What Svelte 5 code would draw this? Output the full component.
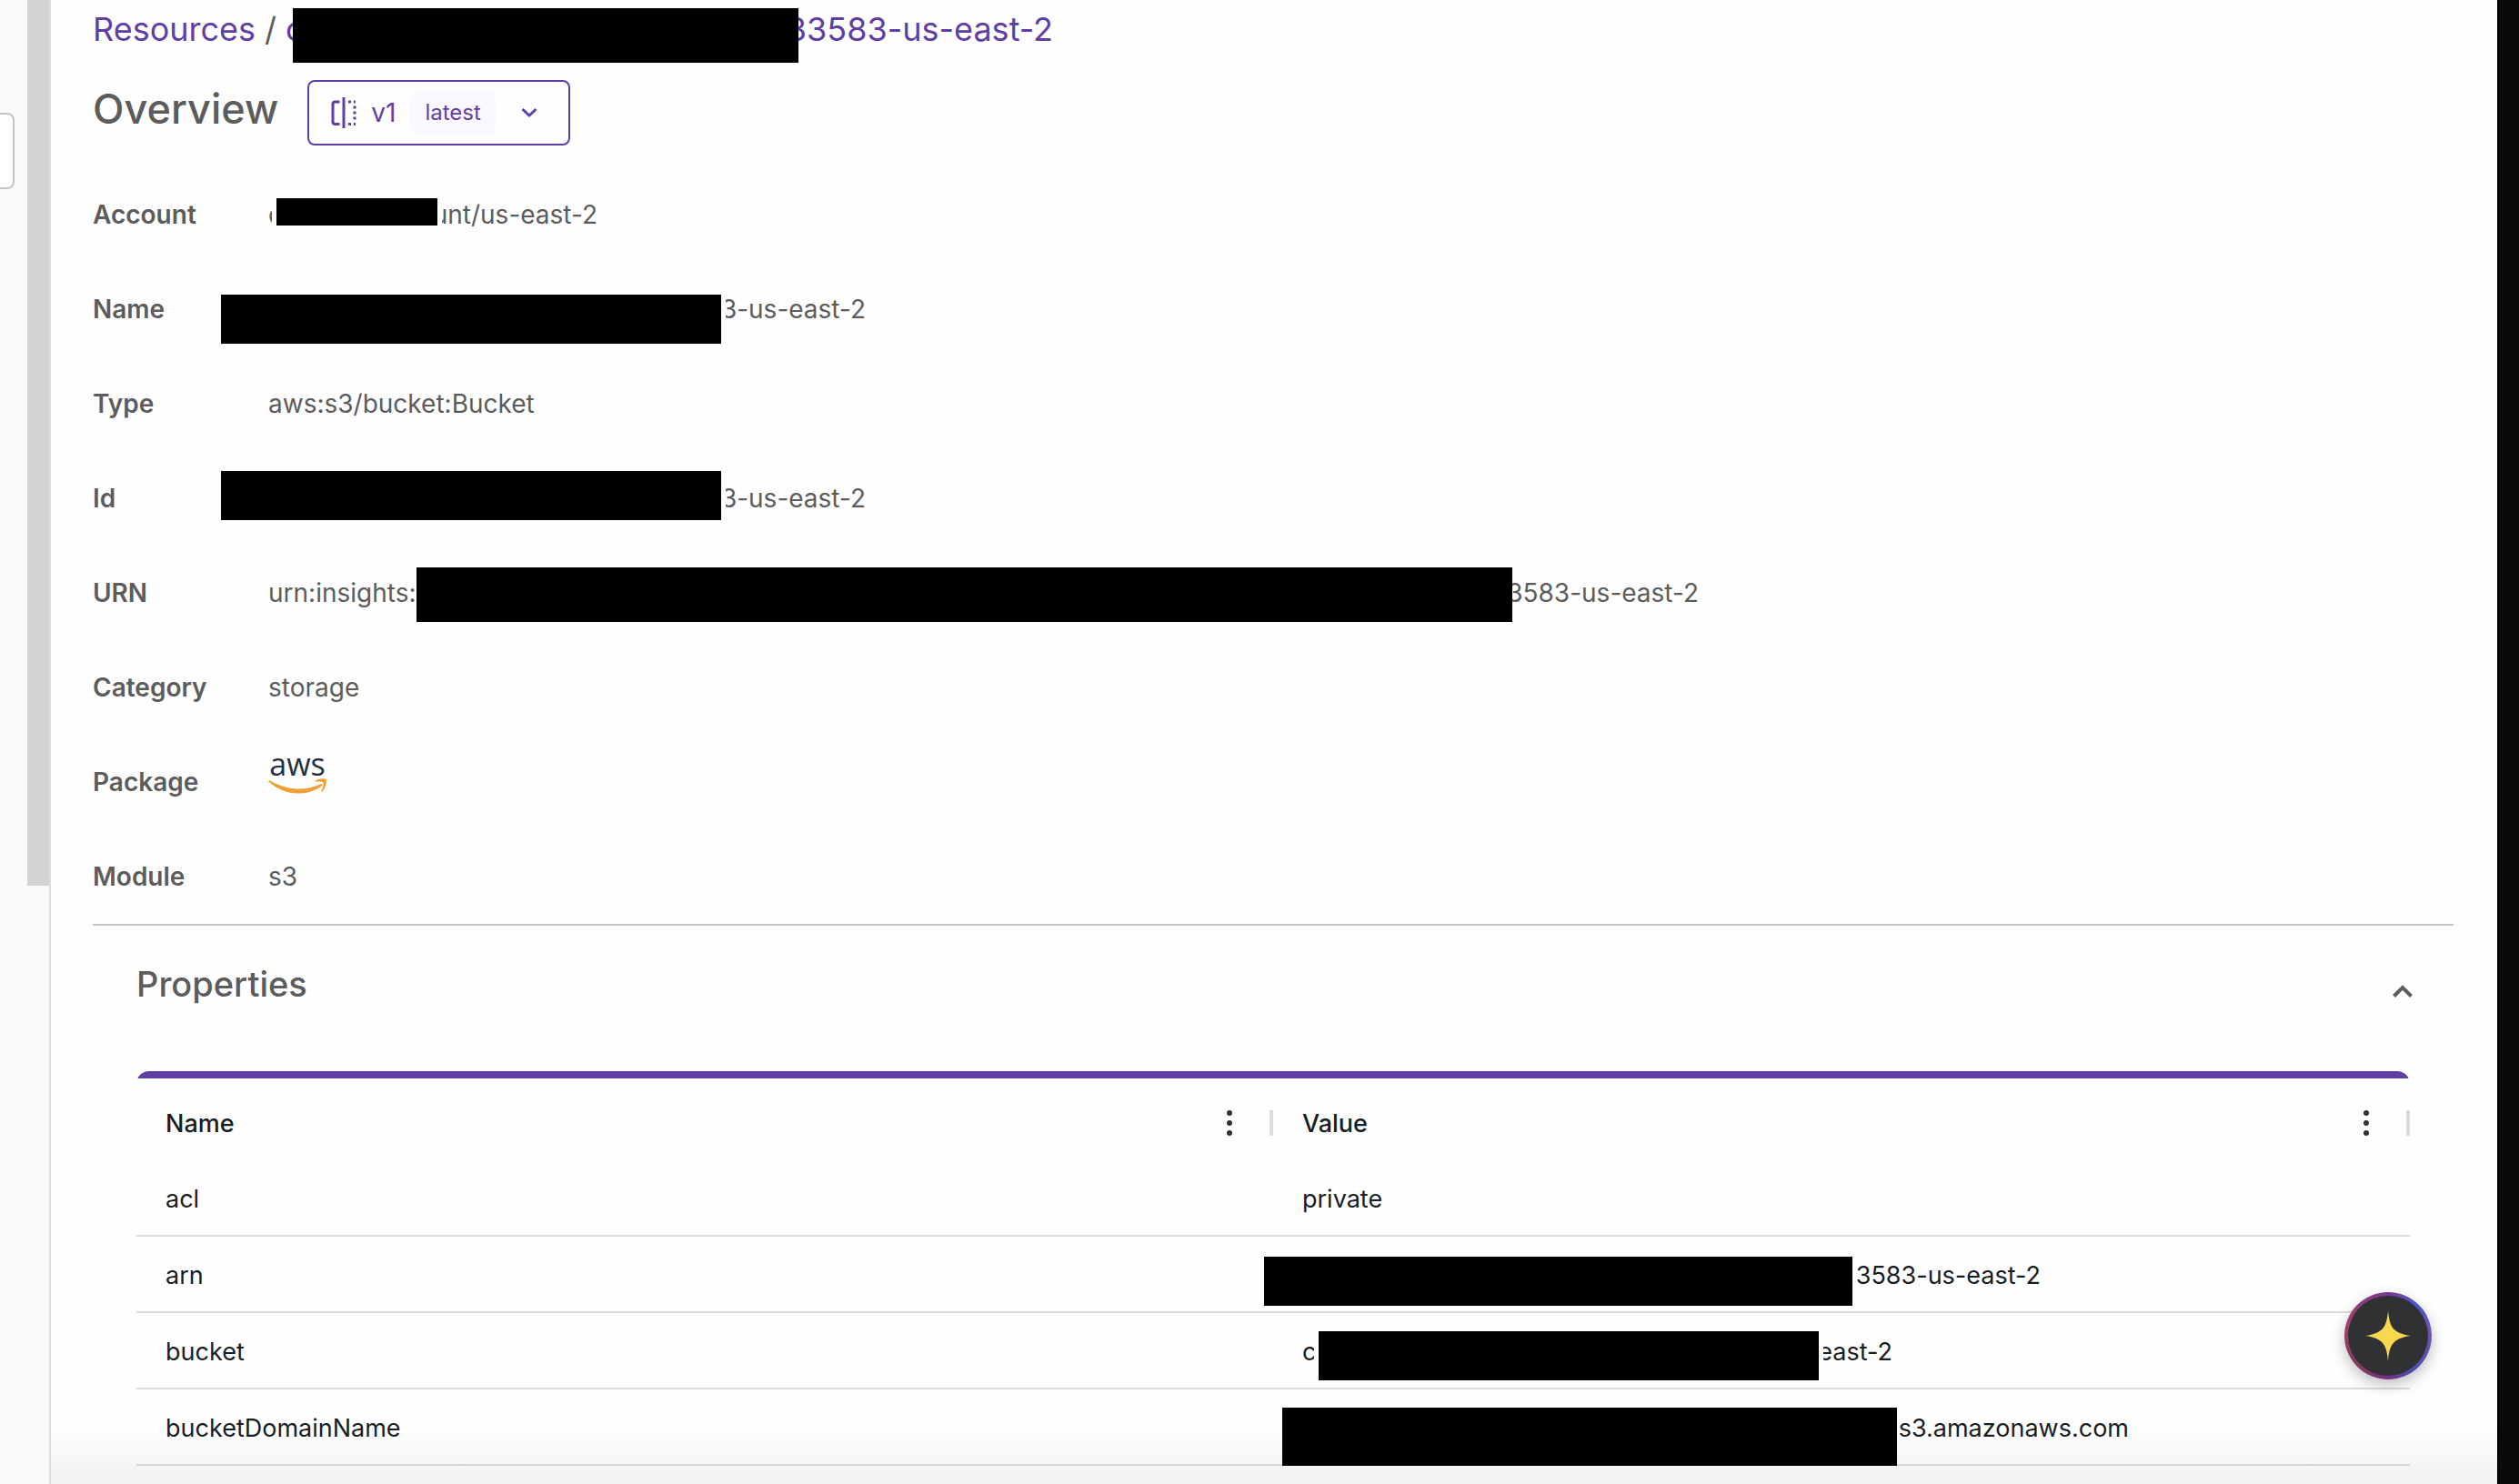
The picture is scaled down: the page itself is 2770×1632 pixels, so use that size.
<script>
  // Cover geometry is relative to the value cell: x, y, width, height.
  const details = [
    { label: 'Account', pre: 'c', post: 'unt/us-east-2', end: 362, cover: [9, 34, 177, 30], gap: true },
    { label: 'Name', pre: '', post: '3-us-east-2', end: 657, cover: [-52, 36, 550, 54], gap: true },
    { label: 'Type', pre: 'aws:s3/bucket:Bucket' },
    { label: 'Id', pre: '', post: '3-us-east-2', end: 657, cover: [-52, 22, 550, 54], gap: true },
    { label: 'URN', pre: 'urn:insights:c', post: '3583-us-east-2', end: 1573, cover: [163, 24, 1205, 60] },
    { label: 'Category', pre: 'storage' },
    { label: 'Package', logo: true },
    { label: 'Module', pre: 's3' }
  ];

  const properties = [
    { name: 'acl', pre: 'private' },
    { name: 'arn', pre: '', post: '3583-us-east-2', end: 812, cover: [-42, 18, 647, 54], gap: true },
    { name: 'bucket', pre: 'c', post: 'east-2', end: 649, cover: [18, 16, 550, 54], gap: true },
    { name: 'bucketDomainName', pre: '', post: 's3.amazonaws.com', end: 909, cover: [-22, 16, 676, 64] }
  ];

  let open = $state(true);

  function box([x, y, w, h]) {
    return `left:${x}px;top:${y}px;width:${w}px;height:${h}px`;
  }
</script>

{#snippet value(item)}
  <span class="value">
    <span class="parts" style={item.end ? `width:${item.end}px` : null}>
      <span>{item.pre}</span>
      {#if item.post}<span>{item.post}</span>{/if}
    </span>
    {#if item.cover}<span class="cover" class:gap={item.gap} style={box(item.cover)}></span>{/if}
  </span>
{/snippet}

{#snippet dots()}
  <svg width="6" height="28" viewBox="0 0 6 28" fill="#2f3133" aria-hidden="true">
    <circle cx="3" cy="3" r="3" /><circle cx="3" cy="14" r="3" /><circle cx="3" cy="25" r="3" />
  </svg>
{/snippet}

<div class="page">
  <aside class="side">
    <div class="nav"><input class="search" aria-label="Search" /></div>
    <div class="track"><div class="thumb"></div></div>
  </aside>

  <main>
    <nav class="crumbs" aria-label="Breadcrumb">
      <a href="#resources">Resources</a>
      <span class="slash">/</span>
      <a class="current" href="#resource">
        <span>c</span><span>33583-us-east-2</span>
        <span class="cover crumb-cover"></span>
      </a>
    </nav>

    <header class="title">
      <h1>Overview</h1>
      <button class="version" type="button">
        <svg width="28" height="34" viewBox="0 0 28 34" fill="none" stroke="currentColor" stroke-width="3" aria-hidden="true">
          <path d="M9.500 5H4.500Q2 5 2 7.500V27Q2 29.500 4.500 29.500H9.500" />
          <path d="M14 0V34" />
          <path d="M19 5H22M25 5H27M26 9.500V12.500M26 15.500V18.500M26 21.500V24.500M19 29.500H22M25 29.500H27" />
        </svg>
        <span class="v">v1</span>
        <span class="chip">latest</span>
        <svg class="down" width="18" height="12" viewBox="0 0 18 12" fill="none" stroke="currentColor" stroke-width="3" aria-hidden="true">
          <path d="M1.500 2L9 9L16.500 2" />
        </svg>
      </button>
    </header>

    <dl>
      {#each details as item}
        <div class="row">
          <dt>{item.label}</dt>
          <dd>
            {#if item.logo}
              <span class="aws">
                <span>aws</span>
                <svg width="64" height="18" viewBox="0 0 64 18" fill="#f29f38" aria-hidden="true">
                  <path d="M0.500 3.500C0 2.500 1 1.800 2 2.400C21 13.500 41 14 57.500 6.200C59 5.500 60.200 7 58.800 8.200C43 20.500 17 19.500 0.500 3.500Z" />
                  <path d="M52 2.700C55 0 63 -0.200 63.700 1.200C64.500 3 63.200 11 59.500 14.400C58.700 15 58 14.700 58.400 13.800C59.400 11.300 61.300 6 60.400 4.600C59.500 3.300 55.500 3.500 53 3.800C52 3.900 51.200 3.300 52 2.700Z" />
                </svg>
              </span>
            {:else}
              {@render value(item)}
            {/if}
          </dd>
        </div>
      {/each}
    </dl>

    <section>
      <h2>
        <button type="button" aria-expanded={open} onclick={() => (open = !open)}>
          <span>Properties</span>
          <svg width="24" height="16" viewBox="0 0 24 16" fill="none" stroke="currentColor" stroke-width="4" aria-hidden="true">
            <path d="M2.500 13.500L12 4L21.500 13.500" />
          </svg>
        </button>
      </h2>
      {#if open}
        <div class="grid">
          <table>
            <thead>
              <tr>
                {#each ['Name', 'Value'] as head}
                  <th scope="col">
                    <div class="head">
                      <span>{head}</span>
                      <button type="button" aria-label="{head} column menu">{@render dots()}</button>
                      <i></i>
                    </div>
                  </th>
                {/each}
              </tr>
            </thead>
            <tbody>
              {#each properties as item}
                <tr><td>{item.name}</td><td>{@render value(item)}</td></tr>
              {/each}
            </tbody>
          </table>
        </div>
      {/if}
    </section>
  </main>

  <div class="edge"></div>

  <button class="assistant" type="button" aria-label="Open assistant">
    <svg width="50" height="56" viewBox="0 0 50 56" fill="#f7d94f" aria-hidden="true">
      <path d="M25 0C26.500 18 30 25 50 28C30 31 26.500 38 25 56C23.500 38 20 31 0 28C20 25 23.500 18 25 0Z" />
    </svg>
  </button>
  <div class="fade"></div>
</div>

<style>
  :global(body) {
    margin: 0;
    background: #fff;
  }
  .page {
    position: relative;
    display: flex;
    height: 100vh;
    overflow: hidden;
    font-family: Inter, sans-serif;
    font-size: 28px;
    color: #5c5c5c;
    background: #fefefe;
  }
  button {
    font: inherit;
    color: inherit;
    background: none;
    border: 0;
    padding: 0;
    cursor: pointer;
  }
  svg {
    display: block;
    flex: none;
  }
  .side {
    display: flex;
    flex: none;
    background: #f9f9f9;
    border-right: 2px solid #dcdcdc;
  }
  .nav {
    display: flex;
    justify-content: flex-end;
    width: 30px;
    padding: 124px 14px 0 0;
    box-sizing: border-box;
    overflow: hidden;
  }
  .search {
    flex: none;
    width: 120px;
    height: 84px;
    box-sizing: border-box;
    border: 2px solid #c4c4c4;
    border-radius: 8px;
    background: #fff;
  }
  .track {
    width: 24px;
  }
  .thumb {
    height: 974px;
    background: #d3d3d3;
  }
  main {
    flex: 1;
    min-width: 0;
    padding: 0 48px 0 46px;
  }
  .edge {
    flex: none;
    width: 22px;
    background: #0a0a0a;
    border-left: 2px solid #000;
  }
  .crumbs {
    display: flex;
    gap: 10px;
    height: 64px;
    line-height: 64px;
    font-size: 36px;
  }
  .crumbs a {
    color: #5f3fa6;
    text-decoration: none;
  }
  .current {
    position: relative;
    display: flex;
    justify-content: space-between;
    width: 844px;
  }
  .cover {
    position: absolute;
    background: #000;
  }
  .crumb-cover {
    left: 8px;
    top: 9px;
    width: 556px;
    height: 60px;
  }
  .gap {
    box-shadow: -5px 0 #fefefe, 5px 0 #fefefe;
  }
  .title {
    display: flex;
    align-items: center;
    gap: 32px;
    margin: 24px 0;
  }
  h1 {
    margin: 0 0 8px;
    font-size: 45px;
    line-height: 56px;
    font-weight: 500;
  }
  .version {
    display: flex;
    align-items: center;
    height: 72px;
    box-sizing: border-box;
    padding: 0 34px 0 24px;
    border: 2px solid #5f3fa6;
    border-radius: 8px;
    color: #5f3fa6;
  }
  .v {
    margin: 0 16px;
  }
  .chip {
    padding: 0 16px;
    border-radius: 8px;
    background: #f9f8ff;
    font-size: 24px;
    line-height: 48px;
  }
  .down {
    margin-left: 28px;
  }
  dl {
    margin: 0;
    border-bottom: 2px solid #c4c4c4;
  }
  .row {
    display: grid;
    grid-template-columns: 193px 1fr;
    height: 104px;
    line-height: 104px;
  }
  dt {
    font-weight: 600;
  }
  dd {
    margin: 0;
  }
  .value {
    position: relative;
    display: block;
  }
  .parts {
    display: flex;
    justify-content: space-between;
  }
  .aws {
    display: flex;
    flex-direction: column;
    align-items: center;
    width: 64px;
    padding-top: 16px;
    line-height: 32px;
    font-family: 'Open Sans', sans-serif;
    font-size: 34px;
    font-weight: 500;
    color: #252f3e;
  }
  section {
    padding: 0 48px;
  }
  h2 {
    margin: 0;
    font-size: 38px;
    font-weight: 500;
  }
  h2 button {
    display: flex;
    justify-content: space-between;
    align-items: center;
    width: 100%;
    height: 160px;
    padding: 0 0 32px;
  }
  h2 svg {
    margin: 16px -4px 0 0;
  }
  .grid {
    border-radius: 14px 14px 0 0;
    overflow: hidden;
  }
  table {
    width: 100%;
    table-layout: fixed;
    border-collapse: separate;
    border-spacing: 0;
    border-top: 8px solid #5f3fa6;
    font-size: 27px;
    color: #181d1f;
  }
  th {
    height: 82px;
    padding: 8px 0 0;
    font-weight: 500;
    text-align: left;
  }
  .head {
    display: flex;
    align-items: center;
    padding-left: 32px;
  }
  .head button {
    margin-left: auto;
    padding: 0 41px;
  }
  .head i {
    width: 4px;
    height: 28px;
    background: #dcdddd;
  }
  td {
    height: 78px;
    line-height: 78px;
    padding: 4px 0 0 32px;
    border-bottom: 2px solid #dcdcdc;
  }
  .assistant {
    position: absolute;
    right: 96px;
    bottom: 115px;
    display: grid;
    place-items: center;
    width: 96px;
    height: 96px;
    border: 4px solid transparent;
    border-radius: 50%;
    background:
      linear-gradient(#2f3133, #2f3133) padding-box,
      conic-gradient(#7d3790, #4a56d0 40deg, #7552ad 85deg, #4a4fac 145deg, #6f3280 180deg, #833a5c 220deg, #9b416c 290deg, #7d3790) border-box;
    box-shadow: 0 6px 16px rgba(0, 0, 0, 0.25);
  }
  .fade {
    position: absolute;
    inset: auto 24px 0 56px;
    height: 64px;
    background: linear-gradient(transparent, rgba(0, 0, 0, 0.05));
    pointer-events: none;
  }
</style>
